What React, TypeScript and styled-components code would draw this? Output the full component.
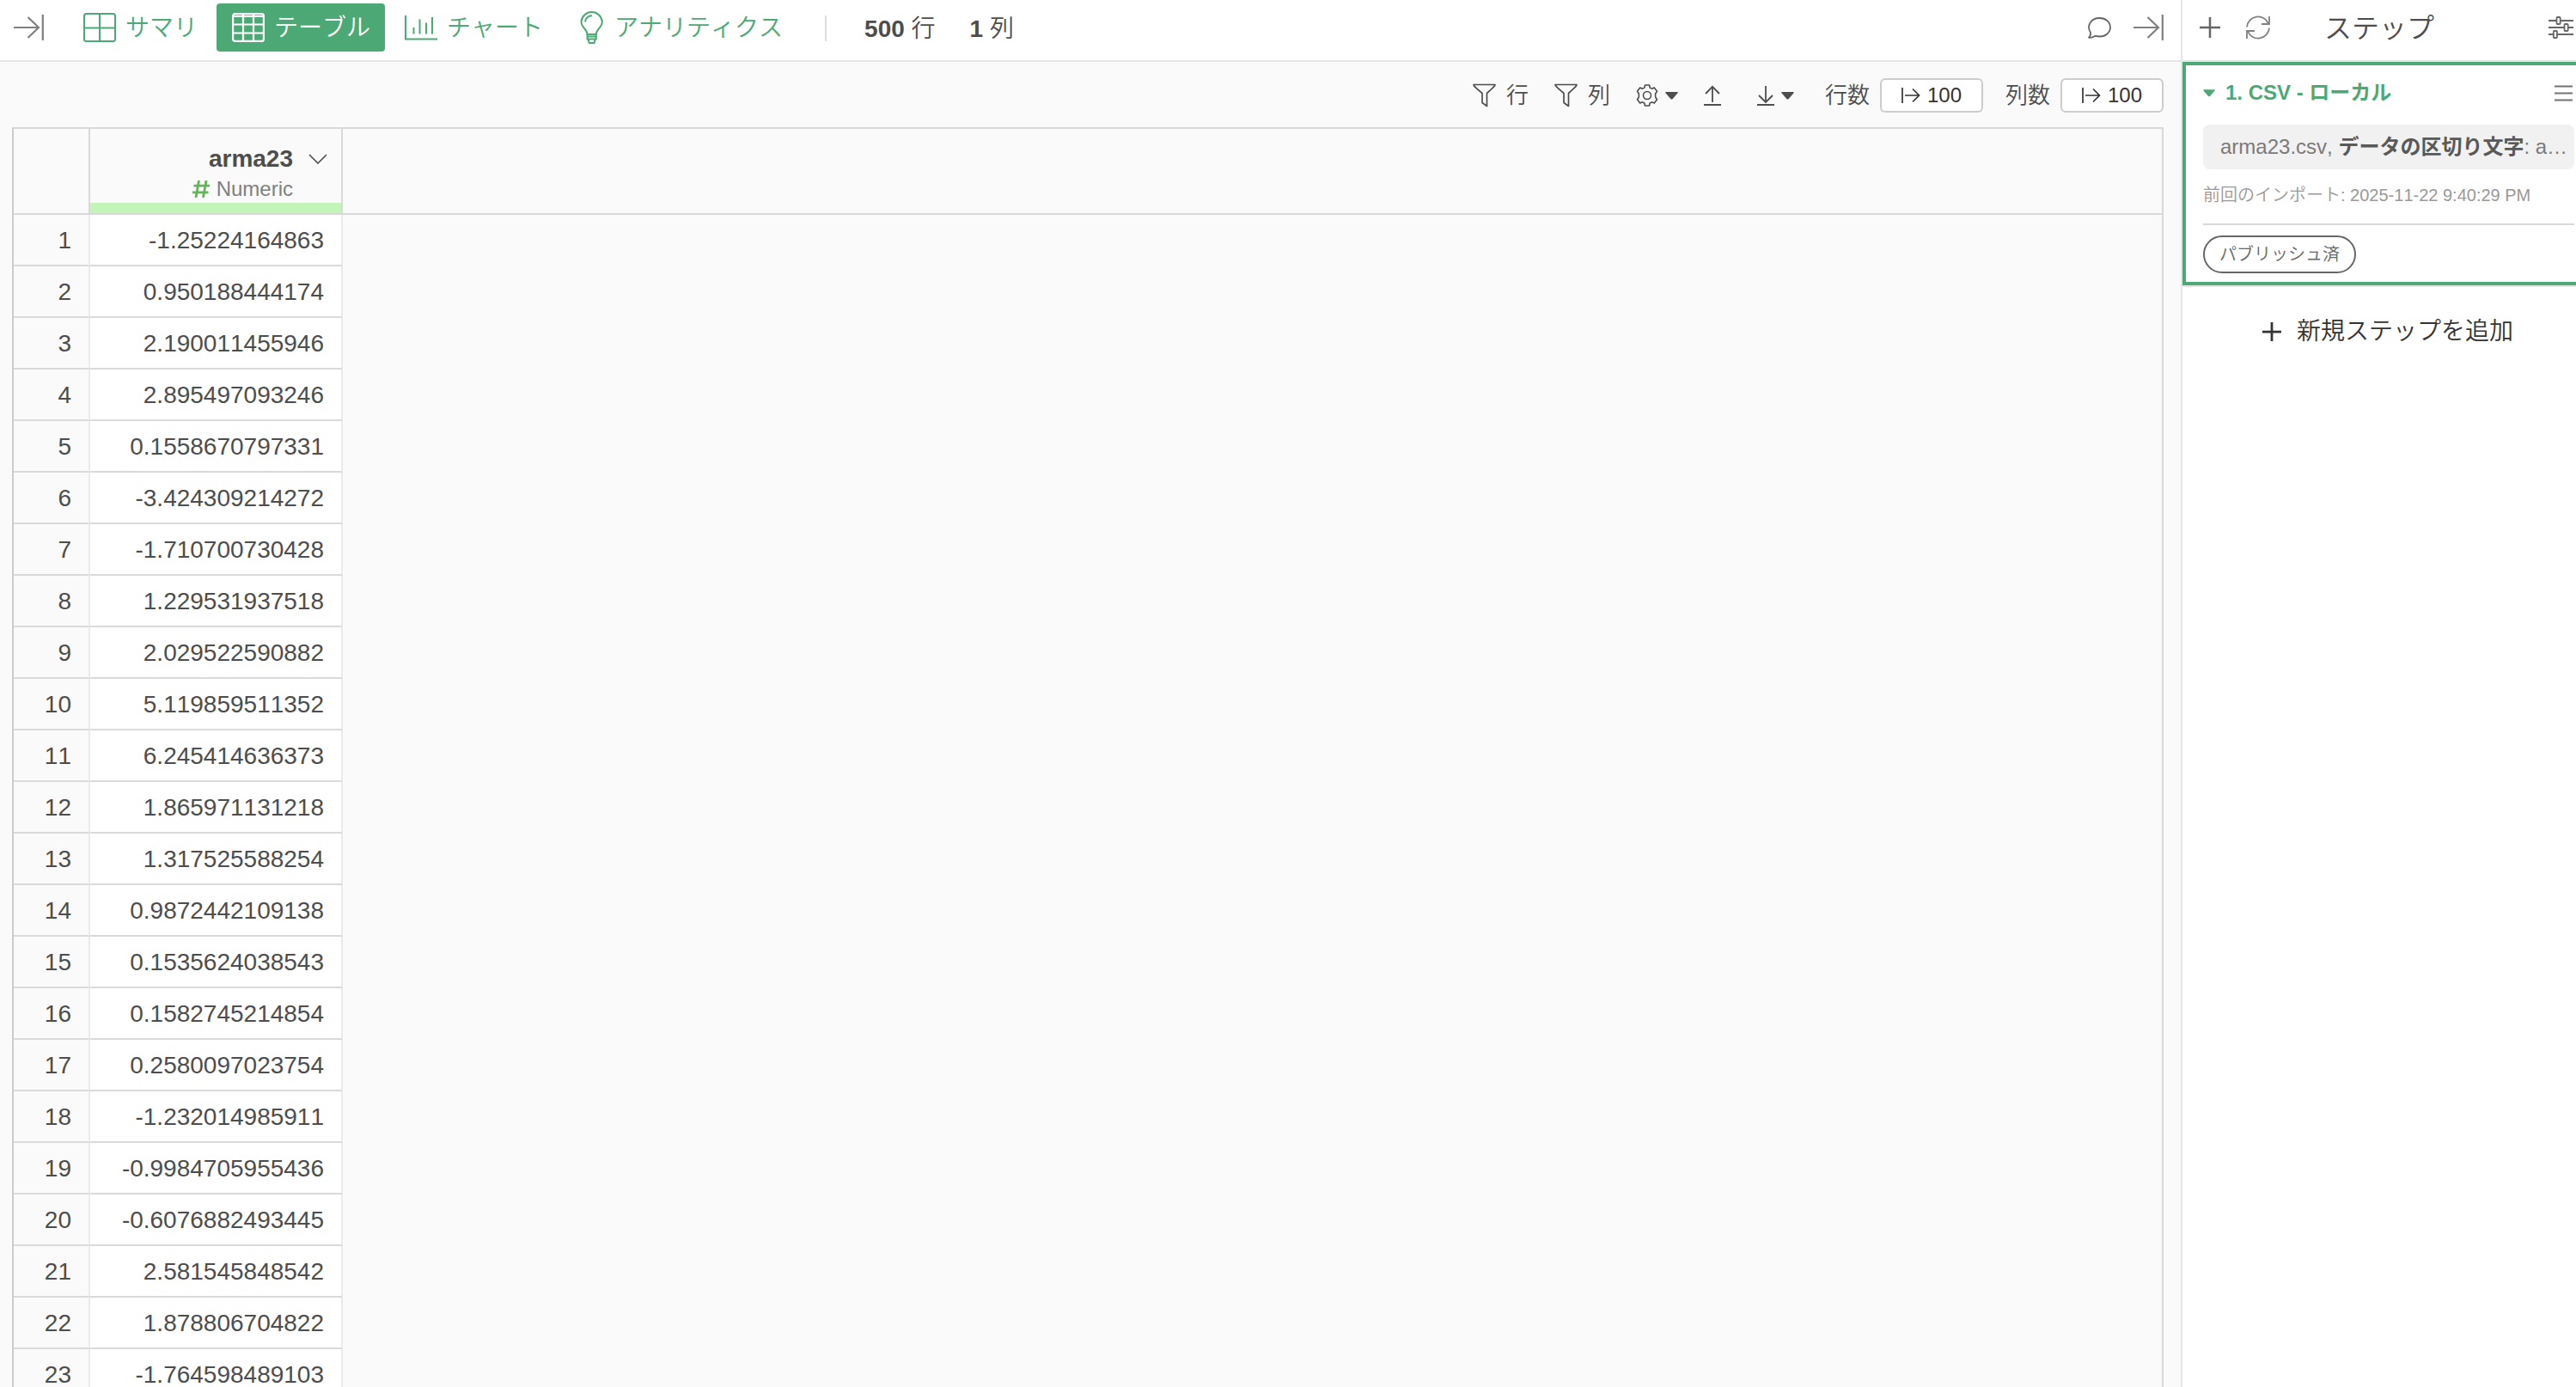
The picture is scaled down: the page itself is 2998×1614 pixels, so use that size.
import React from "react";
import styled, { createGlobalStyle } from "styled-components";

const green = "#4ca975";
const ink = "#4d4d4d";
const fontStack = '"Liberation Sans", "Noto Sans CJK JP", sans-serif';

const GlobalStyle = createGlobalStyle`
  *, *::before, *::after { box-sizing: border-box; }
  body { margin: 0; background: #fff; color: ${ink}; font-family: ${fontStack}; font-weight: 350; font-kerning: none; }
  button { margin: 0; padding: 0; border: 0; background: none; color: inherit; font: inherit; font-kerning: inherit; cursor: pointer; }
  h1, h2, p { margin: 0; font: inherit; font-kerning: inherit; }
  b, strong { font-weight: 700; }
  svg { display: block; flex: none; }
`;

const Page = styled.div`
  display: flex;
  height: 100vh;
  overflow: hidden;
`;

const Main = styled.main`
  flex: 1;
  min-width: 0;
  display: flex;
  flex-direction: column;
  background: #fafafa;
`;

const Sidebar = styled.aside`
  width: 460px;
  flex: none;
  border-left: 2px solid #e6e6e6;
  background: #fff;
`;

const MainHeader = styled.header`
  display: flex;
  align-items: flex-start;
  height: 72px;
  flex: none;
  padding: 4px 20px 0 16px;
  border-bottom: 2px solid #e6e6e6;
  background: #fff;
`;

const IconButton = styled.button<{ $tone?: string; $height?: number }>`
  display: flex;
  align-items: center;
  height: ${(p) => p.$height ?? 56}px;
  gap: 8px;
  color: ${(p) => p.$tone ?? "#808080"};
`;

const Tabs = styled.nav`
  display: flex;
  gap: 5px;
  margin-left: 28px;
`;

const Tab = styled.button<{ $active?: boolean }>`
  display: flex;
  align-items: center;
  gap: 11px;
  height: 56px;
  padding: 0 17px 0 18px;
  border-radius: 4px;
  font-size: 28px;
  line-height: 40px;
  color: ${(p) => (p.$active ? "#fff" : green)};
  background: ${(p) => (p.$active ? green : "transparent")};
`;

const TabLabel = styled.span`
  padding-top: 2px;
`;

const Counts = styled.div`
  display: flex;
  gap: 40px;
  height: 30px;
  margin: 14px 0 0 32px;
  padding-left: 44px;
  border-left: 2px solid #ddd;
  font-size: 28px;
  line-height: 32px;
`;

const HeaderActions = styled.div`
  display: flex;
  gap: 26px;
  margin-left: auto;
`;

const Toolbar = styled.div`
  display: flex;
  justify-content: flex-end;
  align-items: center;
  gap: 36px;
  height: 76px;
  flex: none;
  padding: 2px 20px 0;
  font-size: 26px;
  line-height: 40px;
`;

const ToolGroup = styled.div<{ $gap: number }>`
  display: flex;
  align-items: center;
  gap: ${(p) => p.$gap}px;
`;

const ToolButton = styled.button<{ $gap?: number; $after?: number }>`
  display: flex;
  align-items: center;
  gap: ${(p) => p.$gap ?? 12}px;
  padding-right: ${(p) => p.$after ?? 0}px;
`;

const RangeField = styled.div`
  display: flex;
  align-items: center;
  gap: 12px;
`;

const RangeButton = styled.button`
  display: flex;
  align-items: center;
  justify-content: center;
  gap: 8px;
  width: 120px;
  height: 40px;
  border: 2px solid #ccc;
  border-radius: 6px;
  background: #fff;
  color: #333;
  font-size: 24px;
  line-height: 36px;
`;

const TableFrame = styled.div`
  flex: 1;
  min-height: 0;
  overflow: hidden;
  margin: 0 20px 0 14px;
  border: 2px solid #d9d9d9;
  border-bottom: 0;
  border-left-color: #ccc;
`;

const Table = styled.table`
  width: 100%;
  border-collapse: separate;
  border-spacing: 0;
  table-layout: fixed;
  font-size: 28px;
  line-height: 32px;
`;

const HeadCell = styled.th<{ $width?: number }>`
  width: ${(p) => (p.$width ? `${p.$width}px` : "auto")};
  height: 100px;
  padding: 0;
  border-bottom: 2px solid #d9d9d9;
  border-right: ${(p) => (p.$width ? "2px solid #d9d9d9" : "0")};
  text-align: right;
`;

const ColumnHead = styled.div`
  display: grid;
  grid-template-columns: 1fr 22px;
  grid-template-rows: 34px 36px;
  column-gap: 18px;
  align-items: center;
  height: 98px;
  padding: 18px 16px 0 0;
  border-bottom: 12px solid #c3f4b8;
`;

const ColumnType = styled.div`
  display: flex;
  justify-content: flex-end;
  align-items: center;
  gap: 8px;
  font-size: 24px;
  line-height: 28px;
  font-weight: 400;
  color: #808080;
`;

const Cell = styled.td<{ $plain?: boolean }>`
  height: 60px;
  padding: 2px 20px 0 0;
  background: #fff;
  border-right: ${(p) => (p.$plain ? "0" : "2px solid #ebebeb")};
  border-bottom: ${(p) => (p.$plain ? "0" : "2px solid #dadada")};
  text-align: right;
  ${(p) => p.$plain && "background: transparent;"}
`;

const IndexCell = styled(Cell)`
  background: #fafafa;
`;

const SideHeader = styled.header`
  display: flex;
  align-items: center;
  height: 72px;
  padding: 0 3px 6px 20px;
  border-bottom: 2px solid #e6e6e6;
`;

const SideTitle = styled.h1`
  flex: 1;
  padding: 2px 0 0 63px;
  font-size: 32px;
  line-height: 40px;
`;

const StepCard = styled.section`
  border: 4px solid ${green};
  border-right: 0;
  height: 260px;
  padding: 14px 2px 0 20px;
`;

const StepHead = styled.div`
  display: flex;
  justify-content: space-between;
  align-items: center;
  padding-right: 2px;
`;

const StepTitle = styled.button`
  display: flex;
  align-items: center;
  gap: 12px;
  color: ${green};
  font-size: 24px;
  font-weight: 700;
  line-height: 36px;
`;

const StepDetail = styled.p`
  height: 52px;
  margin-top: 19px;
  padding: 0 6px 0 20px;
  overflow: hidden;
  text-overflow: ellipsis;
  white-space: nowrap;
  border-radius: 8px;
  background: #f1f1f1;
  color: #7a7a7a;
  font-size: 24px;
  line-height: 52px;

  strong { color: #595959; }
`;

const ImportedAt = styled.p`
  height: 65px;
  padding-top: 15px;
  border-bottom: 2px solid #d9d9d9;
  color: #999;
  font-size: 20px;
  line-height: 30px;
`;

const Badge = styled.span`
  display: inline-flex;
  align-items: center;
  height: 44px;
  margin-top: 12px;
  padding: 0 17px;
  border: 2px solid #666;
  border-radius: 22px;
  color: #666;
  font-size: 20px;
  line-height: 28px;
`;

const AddStep = styled.button`
  display: flex;
  align-items: center;
  justify-content: center;
  gap: 18px;
  width: 100%;
  height: 106px;
  padding-left: 20px;
  border-top: 2px solid #e6e6e6;
  color: #333;
  font-size: 28px;
  line-height: 40px;
`;

const ArrowToBar = () => (
  <svg width="35" height="32" viewBox="0 0 35 32" fill="none" stroke="currentColor" strokeWidth="2.2">
    <path d="M0 16H29M16.500 4L29 16L16.500 28M33.800 1V31" />
  </svg>
);

const SummaryIcon = () => (
  <svg width="38" height="34" viewBox="0 0 38 34" fill="none" stroke="currentColor" strokeWidth="2">
    <rect x="1" y="1" width="36" height="32" rx="2.500" />
    <path d="M19 1V33M1 17.500H37" />
  </svg>
);

const TableIcon = () => (
  <svg width="38" height="34" viewBox="0 0 38 34" fill="none" stroke="currentColor" strokeWidth="2.200">
    <rect x="1.100" y="1.100" width="35.800" height="31.800" rx="2.500" />
    <path d="M1 4H37M13 2V33M25 2V33M1 13.500H37M1 23.500H37" />
  </svg>
);

const ChartIcon = () => (
  <svg width="38" height="30" viewBox="0 0 38 30" fill="none" stroke="currentColor" strokeWidth="2">
    <path d="M1 1V28.500H38M10.500 15V22.500M17.500 5.500V22.500M25 9.500V22.500M32 3V22.500" />
  </svg>
);

const BulbIcon = () => (
  <svg width="32" height="40" viewBox="0 0 32 40" fill="none" stroke="currentColor" strokeWidth="2">
    <path d="M11.500 28C11.500 22 4.500 20 4.500 13.200A12.200 12.200 0 0 1 28.800 13.200C28.800 20 21.800 22 21.800 28Z" />
    <path d="M9 13.500A7.500 7.500 0 0 1 17 6.300M11.500 28V33.500H21.800V28M11.500 30.500H21.800M12.500 33.500L13.800 38H19.500L20.800 33.500" />
  </svg>
);

const CommentIcon = () => (
  <svg width="27" height="25" viewBox="0 0 27 25" fill="none" stroke="#666" strokeWidth="1.800">
    <path d="M1 23.800C3 22 3.300 20 3 17.800C-2 10 3.500 1 13.500 1C20.500 1 26 5.700 26 11.800C26 18 20.500 22.500 13.500 22.500C11.500 22.500 10 22.200 8.500 21.700C6.500 23 3.500 24 1 23.800Z" strokeLinejoin="round" />
  </svg>
);

const FunnelIcon = () => (
  <svg width="27" height="28" viewBox="0 0 27 28" fill="none" stroke="currentColor" strokeWidth="1.700" strokeLinejoin="round">
    <path d="M1 1.500H26C26 3 25 4 16.500 11.500V26.500L11 22.500V11.500C2 4 1 3 1 1.500Z" />
  </svg>
);

const GearIcon = () => (
  <svg width="26" height="26" viewBox="0 0 26 26" fill="none" stroke="currentColor" strokeWidth="1.600" strokeLinejoin="round">
    <path d="M10.500 1H15.500L16.200 4.200Q17.400 4.500 18.500 5.200L21.300 4L24.500 8.200L22.800 10.800Q22.300 13 22.800 15.200L24.500 17.800L21.300 22L18.500 20.800Q17.400 21.500 16.200 21.800L15.500 25H10.500L9.800 21.800Q8.600 21.500 7.500 20.800L4.700 22L1.500 17.800L3.200 15.200Q3.700 13 3.200 10.800L1.500 8.200L4.700 4L7.500 5.200Q8.600 4.500 9.800 4.200Z" />
    <circle cx="13" cy="13" r="4.500" />
  </svg>
);

const Caret = ({ width = 15 }: { width?: number }) => (
  <svg width={width} height="9" viewBox="0 0 15 9" fill="currentColor">
    <path d="M1 0H14Q15.500 0 14.500 1.300L8.500 8.200Q7.500 9 6.500 8.200L.5 1.300Q-.5 0 1 0Z" />
  </svg>
);

const UploadIcon = () => (
  <svg width="20" height="24" viewBox="0 0 20 24" fill="none" stroke="currentColor" strokeWidth="1.800">
    <path d="M10 20V2M2 10L10 1.800L18 10M0 23H20" />
  </svg>
);

const DownloadIcon = () => (
  <svg width="20" height="24" viewBox="0 0 20 24" fill="none" stroke="currentColor" strokeWidth="1.800">
    <path d="M10 1V20M2 12L10 20L18 12M0 23H20" />
  </svg>
);

const RangeIcon = () => (
  <svg width="22" height="20" viewBox="0 0 22 20" fill="none" stroke="currentColor" strokeWidth="1.700">
    <path d="M1 1V19M4 10H20.500M13 2.500L20.500 10L13 17.500" />
  </svg>
);

const ChevronIcon = () => (
  <svg width="22" height="12" viewBox="0 0 22 12" fill="none" stroke="currentColor" strokeWidth="1.600">
    <path d="M1 1L11 11L21 1" />
  </svg>
);

const HashIcon = () => (
  <svg width="20" height="20" viewBox="0 0 20 20" fill="none" stroke="#65b45c" strokeWidth="2.800">
    <path d="M7.500 0L4 20M16 0L12.500 20M1.500 6.200H20M0 13.800H18.500" />
  </svg>
);

const PlusIcon = ({ size, weight }: { size: number; weight: number }) => (
  <svg width={size} height={size} viewBox="0 0 24 24" fill="none" stroke="currentColor" strokeWidth={weight}>
    <path d="M12 0V24M0 12H24" />
  </svg>
);

const RefreshIcon = () => (
  <svg width="28" height="28" viewBox="0 0 28 28" fill="none" stroke="currentColor" strokeWidth="1.800">
    <path d="M1 13.500A13 13 0 0 1 26 9.500M27 1V10H18M27 14.500A13 13 0 0 1 2 18.500M1 27V18H10" />
  </svg>
);

const SlidersIcon = () => (
  <svg width="29" height="26" viewBox="0 0 29 26" fill="none" stroke="#666" strokeWidth="1.800">
    <path d="M0 5H9M14 5H29M0 13H18M23 13H29M0 21H5.500M10.500 21H29" />
    <rect x="9.500" y="1" width="4.200" height="8" rx="1" />
    <rect x="18.500" y="9" width="4.200" height="8" rx="1" />
    <rect x="5.800" y="17" width="4.200" height="8" rx="1" />
  </svg>
);

const MenuIcon = () => (
  <svg width="21" height="19" viewBox="0 0 21 19" fill="none" stroke="#737373" strokeWidth="2">
    <path d="M0 1.500H21M0 9.500H21M0 17.500H21" />
  </svg>
);

const values = [
  "-1.25224164863", "0.950188444174", "2.190011455946", "2.895497093246", "0.1558670797331",
  "-3.424309214272", "-1.710700730428", "1.229531937518", "2.029522590882", "5.119859511352",
  "6.245414636373", "1.865971131218", "1.317525588254", "0.9872442109138", "0.1535624038543",
  "0.1582745214854", "0.2580097023754", "-1.232014985911", "-0.9984705955436", "-0.6076882493445",
  "2.581545848542", "1.878806704822", "-1.764598489103",
];

const tabs = [
  { label: "サマリ", Icon: SummaryIcon },
  { label: "テーブル", Icon: TableIcon, active: true },
  { label: "チャート", Icon: ChartIcon },
  { label: "アナリティクス", Icon: BulbIcon },
];

export default function App() {
  return (
    <Page>
      <GlobalStyle />
      <Main>
        <MainHeader>
          <IconButton><ArrowToBar /></IconButton>
          <Tabs>
            {tabs.map(({ label, Icon, active }) => (
              <Tab key={label} $active={active}><Icon /><TabLabel>{label}</TabLabel></Tab>
            ))}
          </Tabs>
          <Counts>
            <span><b>500</b> 行</span>
            <span><b>1</b> 列</span>
          </Counts>
          <HeaderActions>
            <IconButton><CommentIcon /></IconButton>
            <IconButton><ArrowToBar /></IconButton>
          </HeaderActions>
        </MainHeader>

        <Toolbar>
          <ToolGroup $gap={30}>
            <ToolButton><FunnelIcon />行</ToolButton>
            <ToolButton><FunnelIcon />列</ToolButton>
            <ToolButton $gap={8}><GearIcon /><Caret /></ToolButton>
            <ToolButton $after={12}><UploadIcon /></ToolButton>
            <ToolButton $gap={8}><DownloadIcon /><Caret /></ToolButton>
          </ToolGroup>
          <ToolGroup $gap={26}>
            <RangeField>
              <label htmlFor="row-range">行数</label>
              <RangeButton id="row-range"><RangeIcon />100</RangeButton>
            </RangeField>
            <RangeField>
              <label htmlFor="column-range">列数</label>
              <RangeButton id="column-range"><RangeIcon />100</RangeButton>
            </RangeField>
          </ToolGroup>
        </Toolbar>

        <TableFrame>
          <Table>
            <thead>
              <tr>
                <HeadCell $width={89} />
                <HeadCell $width={294}>
                  <ColumnHead>
                    <span>arma23</span>
                    <button><ChevronIcon /></button>
                    <ColumnType><HashIcon />Numeric</ColumnType>
                  </ColumnHead>
                </HeadCell>
                <HeadCell />
              </tr>
            </thead>
            <tbody>
              {values.map((value, i) => (
                <tr key={value}>
                  <IndexCell>{i + 1}</IndexCell>
                  <Cell>{value}</Cell>
                  <Cell $plain />
                </tr>
              ))}
            </tbody>
          </Table>
        </TableFrame>
      </Main>

      <Sidebar>
        <SideHeader>
          <ToolGroup $gap={30}>
            <IconButton $height={40} $tone="#666"><PlusIcon size={24} weight={2.5} /></IconButton>
            <IconButton $height={40}><RefreshIcon /></IconButton>
          </ToolGroup>
          <SideTitle>ステップ</SideTitle>
          <IconButton $height={40}><SlidersIcon /></IconButton>
        </SideHeader>
        <StepCard>
          <StepHead>
            <StepTitle><Caret width={14} />1. CSV - ローカル</StepTitle>
            <IconButton $height={36}><MenuIcon /></IconButton>
          </StepHead>
          <StepDetail>arma23.csv, <strong>データの区切り文字</strong>: auto</StepDetail>
          <ImportedAt>前回のインポート: 2025-11-22 9:40:29 PM</ImportedAt>
          <Badge>パブリッシュ済</Badge>
        </StepCard>
        <AddStep><PlusIcon size={22} weight={3} />新規ステップを追加</AddStep>
      </Sidebar>
    </Page>
  );
}
